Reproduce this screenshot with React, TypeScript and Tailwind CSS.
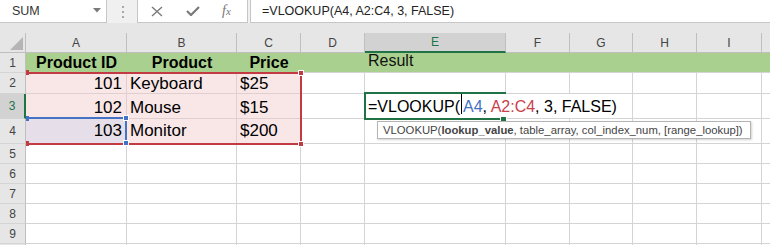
import React from 'react';

const G = 'border-[#d4d4d4]';

function RowHead({ n, h, sel }: { n?: number; h: string; sel?: boolean }) {
  return (
    <div
      className={`${h} w-[26px] shrink-0 flex items-center justify-center text-[12px] border-b border-b-[#d4d4d4] ${
        sel
          ? 'bg-[#d2d2d2] text-[#217346] border-r-2 border-r-[#217346]'
          : 'bg-[#e6e6e6] text-[#444] border-r border-r-[#bfbfbf]'
      }`}
    >
      {n}
    </div>
  );
}

function EmptyCells({ h, from }: { h: string; from: number }) {
  const widths = ['w-[101px]', 'w-[110px]', 'w-[64px]', 'w-[64px]', 'w-[141px]', 'w-[64px]', 'w-[63px]', 'w-[64px]', 'w-[65px]', 'w-[40px]'];
  return (
    <>
      {widths.slice(from).map((w, i) => (
        <div key={i} className={`${h} ${w} shrink-0 border-r border-b ${G} bg-white`} />
      ))}
    </>
  );
}

export default function App() {
  const headers = [
    { l: 'A', w: 'w-[101px]' },
    { l: 'B', w: 'w-[110px]' },
    { l: 'C', w: 'w-[64px]' },
    { l: 'D', w: 'w-[64px]' },
    { l: 'E', w: 'w-[141px]', sel: true },
    { l: 'F', w: 'w-[64px]' },
    { l: 'G', w: 'w-[63px]' },
    { l: 'H', w: 'w-[64px]' },
    { l: 'I', w: 'w-[65px]' },
    { l: '', w: 'w-[40px]' },
  ];
  const pink = 'bg-[#f9e7e7] border-r border-b border-[#e0cfcf]';
  return (
    <div className="relative w-[770px] h-[245px] overflow-hidden bg-white font-['Liberation_Sans',Arial,sans-serif] text-black">
      {/* Formula bar */}
      <div className="flex h-[23px] bg-[#f0f0f0]">
        <div className="relative w-[107px] h-[23px] shrink-0 bg-white border-r border-b border-[#c6c6c6] flex items-center pl-[12px] text-[12.5px] text-[#333]">
          SUM
          <svg className="absolute left-[93px] top-[8px]" width="8" height="5" viewBox="0 0 8 5">
            <polygon points="0,0 8,0 4,4.5" fill="#7a7a7a" />
          </svg>
        </div>
        <div className="w-[30px] shrink-0 flex flex-col items-center justify-center gap-[3px] pl-[2px]">
          <div className="w-[2px] h-[2px] bg-[#a8a8a8]" />
          <div className="w-[2px] h-[2px] bg-[#a8a8a8]" />
          <div className="w-[2px] h-[2px] bg-[#a8a8a8]" />
        </div>
        <div className="w-[111px] h-[23px] shrink-0 bg-white border-l border-r border-b border-[#c6c6c6] flex items-center pl-[13px]">
          <svg width="12" height="11" viewBox="0 0 12 11">
            <path d="M1 1 L11 10 M11 1 L1 10" stroke="#7a7a7a" strokeWidth="1.4" fill="none" />
          </svg>
          <svg className="ml-[23px]" width="14" height="10" viewBox="0 0 14 10">
            <path d="M1 5 L5 9 L13 1" stroke="#7a7a7a" strokeWidth="2.2" fill="none" />
          </svg>
          <span className="ml-[22px] font-['Liberation_Serif',serif] italic text-[14px] leading-none text-[#777]">
            f<span className="text-[11px]">x</span>
          </span>
        </div>
        <div className="w-[2px] shrink-0" />
        <div className="flex-1 h-[23px] bg-white border-l border-b border-[#c6c6c6] flex items-center pl-[11px] text-[12.5px] text-[#222] whitespace-nowrap">
          =VLOOKUP(A4, A2:C4, 3, FALSE)
        </div>
      </div>
      {/* gap */}
      <div className="h-[10px] bg-[#e6e6e6]" />
      {/* Column headers */}
      <div className="flex h-[20px] bg-[#e6e6e6]">
        <div className="relative w-[26px] h-[20px] shrink-0 border-r border-b border-[#bfbfbf]">
          <svg className="absolute left-[10px] top-[4px]" width="13" height="13" viewBox="0 0 13 13">
            <polygon points="13,0 13,13 0,13" fill="#b5b5b5" />
          </svg>
        </div>
        {headers.map((c, i) => (
          <div
            key={i}
            className={`${c.w} h-[20px] shrink-0 flex items-center justify-center text-[12px] border-r border-r-[#bfbfbf] ${
              c.sel
                ? 'bg-[#d2d2d2] text-[#217346] border-b-2 border-b-[#217346]'
                : 'text-[#444] border-b border-b-[#bfbfbf]'
            }`}
          >
            {c.l}
          </div>
        ))}
      </div>

      {/* Row 1 */}
      <div className="flex h-[20px]">
        <RowHead n={1} h="h-[20px]" />
        <div className="h-[20px] w-[101px] shrink-0 bg-[#a9d08e] border-b border-[#d4d4d4] flex items-end justify-center pb-[1px]">
          <span className="text-[16px] font-bold leading-none">Product ID</span>
        </div>
        <div className="h-[20px] w-[110px] shrink-0 bg-[#a9d08e] border-b border-[#d4d4d4] flex items-end justify-center pb-[1px]">
          <span className="text-[16px] font-bold leading-none">Product</span>
        </div>
        <div className="h-[20px] w-[64px] shrink-0 bg-[#a9d08e] border-b border-[#d4d4d4] flex items-end justify-center pb-[1px]">
          <span className="text-[16px] font-bold leading-none">Price</span>
        </div>
        <div className="h-[20px] w-[64px] shrink-0 bg-[#a9d08e] border-b border-[#d4d4d4]" />
        <div className="h-[20px] w-[141px] shrink-0 bg-[#a9d08e] border-b border-[#d4d4d4] flex items-end pl-[3px] pb-[3px]">
          <span className="text-[16px] leading-none text-[#111]">Result</span>
        </div>
        <div className="h-[20px] w-[64px] shrink-0 bg-[#a9d08e] border-b border-[#d4d4d4]" />
        <div className="h-[20px] w-[63px] shrink-0 bg-[#a9d08e] border-b border-[#d4d4d4]" />
        <div className="h-[20px] w-[64px] shrink-0 bg-[#a9d08e] border-b border-[#d4d4d4]" />
        <div className="h-[20px] w-[65px] shrink-0 bg-[#a9d08e] border-b border-[#d4d4d4]" />
        <div className="h-[20px] w-[40px] shrink-0 bg-[#a9d08e] border-b border-[#d4d4d4]" />
      </div>

      {/* Row 2 */}
      <div className="flex h-[21px]">
        <RowHead n={2} h="h-[21px]" />
        <div className={`h-[21px] w-[101px] shrink-0 ${pink} flex items-end justify-end pr-[4px] pb-[1px]`}>
          <span className="text-[17px] leading-none">101</span>
        </div>
        <div className={`h-[21px] w-[110px] shrink-0 ${pink} flex items-end pl-[3px] pb-[1px]`}>
          <span className="text-[17px] leading-none">Keyboard</span>
        </div>
        <div className={`h-[21px] w-[64px] shrink-0 ${pink} flex items-end pl-[3px] pb-[1px]`}>
          <span className="text-[17px] leading-none">$25</span>
        </div>
        <EmptyCells h="h-[21px]" from={3} />
      </div>

      {/* Row 3 */}
      <div className="flex h-[25px]">
        <RowHead n={3} h="h-[25px]" sel />
        <div className={`h-[25px] w-[101px] shrink-0 ${pink} flex items-end justify-end pr-[4px] pb-[2px]`}>
          <span className="text-[17px] leading-none">102</span>
        </div>
        <div className={`h-[25px] w-[110px] shrink-0 ${pink} flex items-end pl-[3px] pb-[2px]`}>
          <span className="text-[17px] leading-none">Mouse</span>
        </div>
        <div className={`h-[25px] w-[64px] shrink-0 ${pink} flex items-end pl-[3px] pb-[2px]`}>
          <span className="text-[17px] leading-none">$15</span>
        </div>
        <div className={`h-[25px] w-[64px] shrink-0 border-r border-b ${G}`} />
        <div className={`relative z-10 h-[25px] w-[141px] shrink-0 border-b ${G} flex items-end pl-[3px] pb-[3px] overflow-visible`}>
          <span className="text-[16px] leading-none whitespace-nowrap">
            =VLOOKUP(
            <span className="inline-block w-[1px] h-[20px] bg-black align-[-2px] mx-[1px]" />
            <span className="text-[#4472c4]">A4</span>, <span className="text-[#c9414b]">A2:C4</span>, 3, FALSE)
          </span>
        </div>
        <div className={`h-[25px] w-[64px] shrink-0 border-b ${G}`} />
        <div className={`h-[25px] w-[63px] shrink-0 border-r border-b ${G}`} />
        <div className={`h-[25px] w-[64px] shrink-0 border-r border-b ${G}`} />
        <div className={`h-[25px] w-[65px] shrink-0 border-r border-b ${G}`} />
        <div className={`h-[25px] w-[40px] shrink-0 border-r border-b ${G}`} />
      </div>

      {/* Row 4 */}
      <div className="flex h-[25px]">
        <RowHead n={4} h="h-[25px]" />
        <div className="h-[25px] w-[101px] shrink-0 bg-[#e6dfe9] border-r border-b border-[#d6cbd6] flex items-end justify-end pr-[4px] pb-[4px]">
          <span className="text-[17px] leading-none">103</span>
        </div>
        <div className={`h-[25px] w-[110px] shrink-0 ${pink} flex items-end pl-[3px] pb-[4px]`}>
          <span className="text-[17px] leading-none">Monitor</span>
        </div>
        <div className={`h-[25px] w-[64px] shrink-0 ${pink} flex items-end pl-[3px] pb-[4px]`}>
          <span className="text-[17px] leading-none">$200</span>
        </div>
        <EmptyCells h="h-[25px]" from={3} />
      </div>

      {/* Rows 5-10 */}
      {[5, 6, 7, 8, 9, 10].map((n) => (
        <div key={n} className="flex h-[20px]">
          <RowHead n={n < 10 ? n : undefined} h="h-[20px]" />
          <EmptyCells h="h-[20px]" from={0} />
        </div>
      ))}

      {/* Red range A2:C4 */}
      <div className="absolute left-[26px] top-[72px] w-[276px] h-[73px] border-t-2 border-r-2 border-b-2 border-[#c23a42]" />
      <div className="absolute left-[298px] top-[70px] w-[6px] h-[6px] bg-[#c23a42] border border-white" />
      <div className="absolute left-[298px] top-[141px] w-[6px] h-[6px] bg-[#c23a42] border border-white" />
      <div className="absolute left-[26px] top-[70px] w-[3px] h-[5px] bg-[#c23a42]" />
      <div className="absolute left-[26px] top-[141px] w-[3px] h-[5px] bg-[#c23a42]" />

      {/* Blue range A4 */}
      <div className="absolute left-[26px] top-[117px] w-[101px] h-[26px] border-t-2 border-r-2 border-[#4472c4]" />
      <div className="absolute left-[123px] top-[115px] w-[6px] h-[6px] bg-[#4472c4] border border-white" />
      <div className="absolute left-[123px] top-[140px] w-[6px] h-[6px] bg-[#4472c4] border border-white" />
      <div className="absolute left-[26px] top-[116px] w-[3px] h-[5px] bg-[#4472c4]" />

      {/* Active cell E3 (right edge hidden under the overflowing text) */}
      <div className="absolute z-20 left-[364px] top-[92px] w-[142px] h-[28px] border-t-2 border-l-2 border-b-2 border-[#217346]" />
      <div className="absolute z-20 left-[500px] top-[116px] w-[7px] h-[6px] bg-[#217346] border border-white" />

      {/* Tooltip */}
      <div className="absolute z-30 left-[377px] top-[121px] h-[18px] bg-white border border-[#b4b4b4] shadow-[1px_1px_2px_rgba(0,0,0,0.18)] flex items-center pl-[5px] pr-[7px] text-[11.3px] text-[#444] whitespace-nowrap">
        VLOOKUP(<span className="font-bold">lookup_value</span>, table_array, col_index_num, [range_lookup])
      </div>
    </div>
  );
}
